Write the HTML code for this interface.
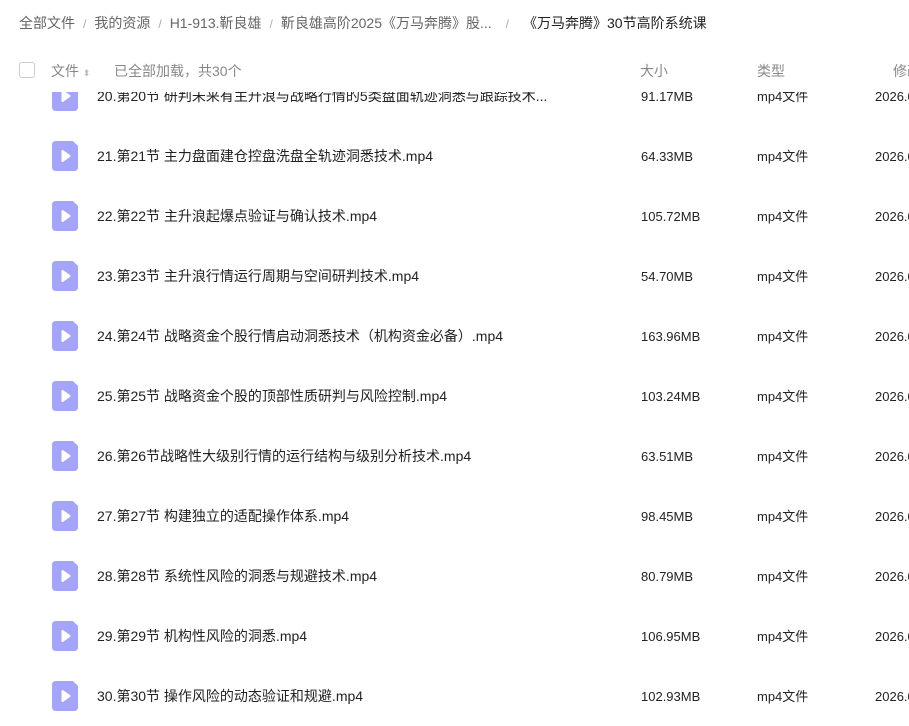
<!DOCTYPE html>
<html><head><meta charset="utf-8"><style>
*{margin:0;padding:0;box-sizing:border-box}
body{width:909px;height:726px;overflow:hidden;background:#fff;font-family:"Liberation Sans","Noto Sans CJK SC",sans-serif;position:relative}
.bc{position:absolute;top:13px;left:19px;font-size:14px;color:#666;white-space:nowrap;line-height:20px}
.bc .s{color:#aaa;margin:0 8px;font-size:12px}
.bc .cur{color:#222}
.hd{position:absolute;top:60px;left:0;width:909px;height:22px;font-size:14px;color:#888;line-height:22px;white-space:nowrap}
.cb{position:absolute;left:19px;top:2px;width:16px;height:16px;border:1px solid #ccc;border-radius:3px}
.list{position:absolute;top:92px;left:0;width:909px;height:634px;overflow:hidden}
.row{position:absolute;left:0;width:909px;height:60px;font-size:14px;color:#222;white-space:nowrap}
.ic{position:absolute;left:52px;top:15px;width:26px;height:30px}
.nm{position:absolute;left:97px;top:20px;line-height:20px}
.sz{position:absolute;left:641px;top:21px;font-size:13px;line-height:20px}
.tp{position:absolute;left:757px;top:21px;font-size:13px;line-height:20px}
.dt{position:absolute;left:875px;top:21px;font-size:13px;line-height:20px}
</style></head><body>
<div class="bc">全部文件<span class="s">/</span>我的资源<span class="s">/</span>H1-913.靳良雄<span class="s">/</span>靳良雄高阶2025《万马奔腾》股...<span class="s" style="margin:0 14px">/</span><span class="cur">《万马奔腾》30节高阶系统课</span></div>
<div class="hd"><div class="cb"></div><span style="position:absolute;left:51px">文件 <span style="font-size:9px;color:#bbb">⬍</span></span><span style="position:absolute;left:114px">已全部加载，共30个</span><span style="position:absolute;left:640px">大小</span><span style="position:absolute;left:757px">类型</span><span style="position:absolute;left:893px">修改</span></div>
<div class="list">
<div class="row" style="top:-26px"><svg class="ic" viewBox="0 0 26 30"><path d="M4 0H21L26 5V26Q26 30 22 30H4Q0 30 0 26V4Q0 0 4 0Z" fill="#a4a4fb"/><path d="M10.5 10L17.5 15L10.5 20Z" fill="#fff" stroke="#fff" stroke-width="2" stroke-linejoin="round"/></svg><span class="nm">20.第20节 研判未来有主升浪与战略行情的5类盘面轨迹洞悉与跟踪技术...</span><span class="sz">91.17MB</span><span class="tp">mp4文件</span><span class="dt">2026.0</span></div>
<div class="row" style="top:34px"><svg class="ic" viewBox="0 0 26 30"><path d="M4 0H21L26 5V26Q26 30 22 30H4Q0 30 0 26V4Q0 0 4 0Z" fill="#a4a4fb"/><path d="M10.5 10L17.5 15L10.5 20Z" fill="#fff" stroke="#fff" stroke-width="2" stroke-linejoin="round"/></svg><span class="nm">21.第21节 主力盘面建仓控盘洗盘全轨迹洞悉技术.mp4</span><span class="sz">64.33MB</span><span class="tp">mp4文件</span><span class="dt">2026.0</span></div>
<div class="row" style="top:94px"><svg class="ic" viewBox="0 0 26 30"><path d="M4 0H21L26 5V26Q26 30 22 30H4Q0 30 0 26V4Q0 0 4 0Z" fill="#a4a4fb"/><path d="M10.5 10L17.5 15L10.5 20Z" fill="#fff" stroke="#fff" stroke-width="2" stroke-linejoin="round"/></svg><span class="nm">22.第22节 主升浪起爆点验证与确认技术.mp4</span><span class="sz">105.72MB</span><span class="tp">mp4文件</span><span class="dt">2026.0</span></div>
<div class="row" style="top:154px"><svg class="ic" viewBox="0 0 26 30"><path d="M4 0H21L26 5V26Q26 30 22 30H4Q0 30 0 26V4Q0 0 4 0Z" fill="#a4a4fb"/><path d="M10.5 10L17.5 15L10.5 20Z" fill="#fff" stroke="#fff" stroke-width="2" stroke-linejoin="round"/></svg><span class="nm">23.第23节 主升浪行情运行周期与空间研判技术.mp4</span><span class="sz">54.70MB</span><span class="tp">mp4文件</span><span class="dt">2026.0</span></div>
<div class="row" style="top:214px"><svg class="ic" viewBox="0 0 26 30"><path d="M4 0H21L26 5V26Q26 30 22 30H4Q0 30 0 26V4Q0 0 4 0Z" fill="#a4a4fb"/><path d="M10.5 10L17.5 15L10.5 20Z" fill="#fff" stroke="#fff" stroke-width="2" stroke-linejoin="round"/></svg><span class="nm">24.第24节 战略资金个股行情启动洞悉技术（机构资金必备）.mp4</span><span class="sz">163.96MB</span><span class="tp">mp4文件</span><span class="dt">2026.0</span></div>
<div class="row" style="top:274px"><svg class="ic" viewBox="0 0 26 30"><path d="M4 0H21L26 5V26Q26 30 22 30H4Q0 30 0 26V4Q0 0 4 0Z" fill="#a4a4fb"/><path d="M10.5 10L17.5 15L10.5 20Z" fill="#fff" stroke="#fff" stroke-width="2" stroke-linejoin="round"/></svg><span class="nm">25.第25节 战略资金个股的顶部性质研判与风险控制.mp4</span><span class="sz">103.24MB</span><span class="tp">mp4文件</span><span class="dt">2026.0</span></div>
<div class="row" style="top:334px"><svg class="ic" viewBox="0 0 26 30"><path d="M4 0H21L26 5V26Q26 30 22 30H4Q0 30 0 26V4Q0 0 4 0Z" fill="#a4a4fb"/><path d="M10.5 10L17.5 15L10.5 20Z" fill="#fff" stroke="#fff" stroke-width="2" stroke-linejoin="round"/></svg><span class="nm">26.第26节战略性大级别行情的运行结构与级别分析技术.mp4</span><span class="sz">63.51MB</span><span class="tp">mp4文件</span><span class="dt">2026.0</span></div>
<div class="row" style="top:394px"><svg class="ic" viewBox="0 0 26 30"><path d="M4 0H21L26 5V26Q26 30 22 30H4Q0 30 0 26V4Q0 0 4 0Z" fill="#a4a4fb"/><path d="M10.5 10L17.5 15L10.5 20Z" fill="#fff" stroke="#fff" stroke-width="2" stroke-linejoin="round"/></svg><span class="nm">27.第27节 构建独立的适配操作体系.mp4</span><span class="sz">98.45MB</span><span class="tp">mp4文件</span><span class="dt">2026.0</span></div>
<div class="row" style="top:454px"><svg class="ic" viewBox="0 0 26 30"><path d="M4 0H21L26 5V26Q26 30 22 30H4Q0 30 0 26V4Q0 0 4 0Z" fill="#a4a4fb"/><path d="M10.5 10L17.5 15L10.5 20Z" fill="#fff" stroke="#fff" stroke-width="2" stroke-linejoin="round"/></svg><span class="nm">28.第28节 系统性风险的洞悉与规避技术.mp4</span><span class="sz">80.79MB</span><span class="tp">mp4文件</span><span class="dt">2026.0</span></div>
<div class="row" style="top:514px"><svg class="ic" viewBox="0 0 26 30"><path d="M4 0H21L26 5V26Q26 30 22 30H4Q0 30 0 26V4Q0 0 4 0Z" fill="#a4a4fb"/><path d="M10.5 10L17.5 15L10.5 20Z" fill="#fff" stroke="#fff" stroke-width="2" stroke-linejoin="round"/></svg><span class="nm">29.第29节 机构性风险的洞悉.mp4</span><span class="sz">106.95MB</span><span class="tp">mp4文件</span><span class="dt">2026.0</span></div>
<div class="row" style="top:574px"><svg class="ic" viewBox="0 0 26 30"><path d="M4 0H21L26 5V26Q26 30 22 30H4Q0 30 0 26V4Q0 0 4 0Z" fill="#a4a4fb"/><path d="M10.5 10L17.5 15L10.5 20Z" fill="#fff" stroke="#fff" stroke-width="2" stroke-linejoin="round"/></svg><span class="nm">30.第30节 操作风险的动态验证和规避.mp4</span><span class="sz">102.93MB</span><span class="tp">mp4文件</span><span class="dt">2026.0</span></div>
</div>
</body></html>
